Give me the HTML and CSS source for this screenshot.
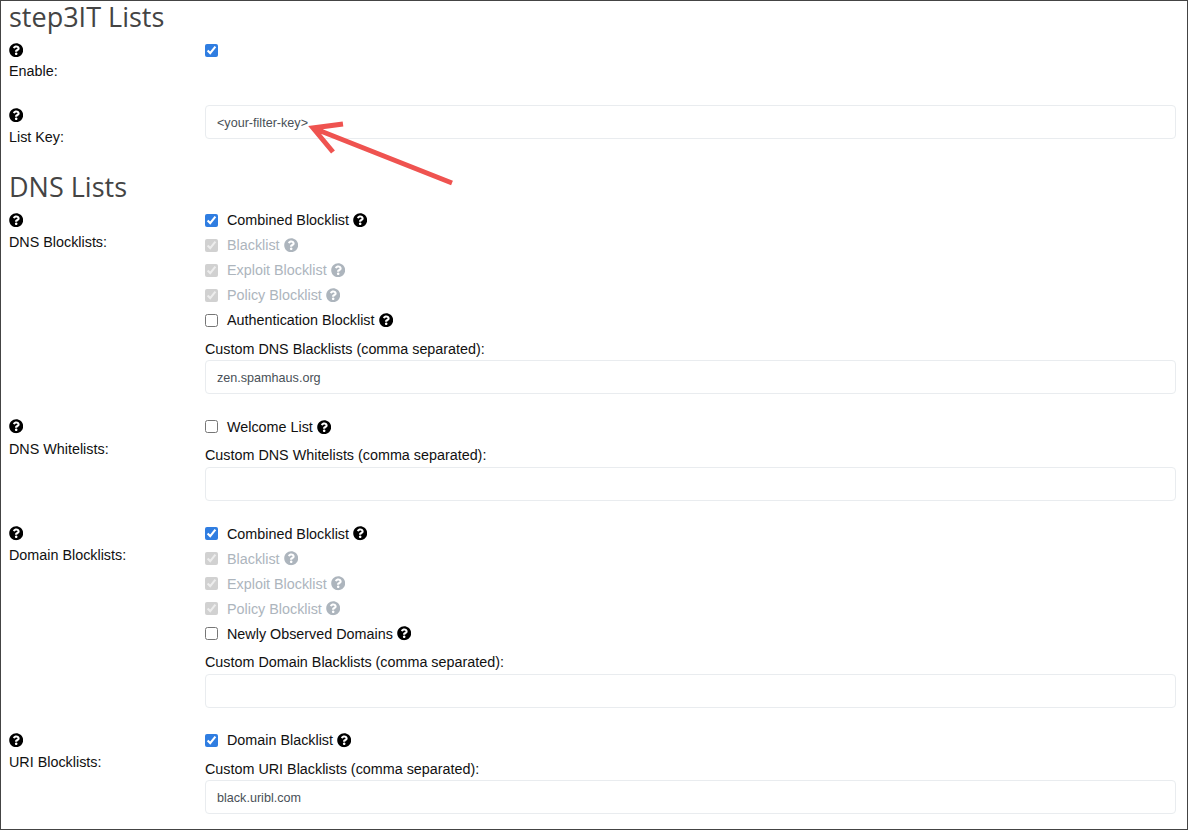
FILE: index.html
```html
<!DOCTYPE html>
<html lang="en">
<head>
    <meta charset="UTF-8">
    <meta name="viewport" content="width=device-width, initial-scale=1.0">
    <title>step3IT Lists</title>
    <link rel="stylesheet" href="styles.css">
</head>
<body>
    <svg class="defs" width="0" height="0">
        <symbol id="help" viewBox="0 0 512 512">
            <path d="M504 256c0 136.997-111.043 248-248 248S8 392.997 8 256C8 119.083 119.043 8 256 8s248 111.083 248 248zM262.655 90c-54.497 0-89.255 22.957-116.549 63.758-3.536 5.286-2.353 12.415 2.715 16.258l34.699 26.31c5.205 3.947 12.621 3.008 16.665-2.122 17.864-22.658 30.113-35.797 57.303-35.797 20.429 0 45.698 13.148 45.698 32.958 0 14.976-12.363 22.667-32.534 33.976C247.128 238.528 216 254.941 216 296v4c0 6.627 5.373 12 12 12h56c6.627 0 12-5.373 12-12v-1.333c0-28.462 83.186-29.647 83.186-106.667 0-58.002-60.165-102-116.531-102zM256 338c-25.365 0-46 20.635-46 46 0 25.364 20.635 46 46 46s46-20.636 46-46c0-25.365-20.635-46-46-46z"/>
        </symbol>
    </svg>
    <div class="frame">
        <h2 class="title">step3IT Lists</h2>

        <div class="row enable-row">
            <div class="row-label">
                <svg class="help"><use href="#help"/></svg>
                <label>Enable:</label>
            </div>
            <div class="row-control">
                <div class="check"><input type="checkbox" checked></div>
            </div>
        </div>

        <div class="row">
            <div class="row-label">
                <svg class="help"><use href="#help"/></svg>
                <label>List Key:</label>
            </div>
            <div class="row-control key-control">
                <input class="text" type="text" value="&lt;your-filter-key&gt;">
            </div>
        </div>

        <h2 class="section">DNS Lists</h2>

        <div class="row">
            <div class="row-label">
                <svg class="help"><use href="#help"/></svg>
                <label>DNS Blocklists:</label>
            </div>
            <div class="row-control">
                <div class="check"><input type="checkbox" checked><span>Combined Blocklist</span><svg class="help"><use href="#help"/></svg></div>
                <div class="check off"><input type="checkbox" checked disabled><span>Blacklist</span><svg class="help"><use href="#help"/></svg></div>
                <div class="check off"><input type="checkbox" checked disabled><span>Exploit Blocklist</span><svg class="help"><use href="#help"/></svg></div>
                <div class="check off"><input type="checkbox" checked disabled><span>Policy Blocklist</span><svg class="help"><use href="#help"/></svg></div>
                <div class="check"><input type="checkbox"><span>Authentication Blocklist</span><svg class="help"><use href="#help"/></svg></div>
                <label class="custom">Custom DNS Blacklists (comma separated):</label>
                <input class="text" type="text" value="zen.spamhaus.org">
            </div>
        </div>

        <div class="row">
            <div class="row-label">
                <svg class="help"><use href="#help"/></svg>
                <label>DNS Whitelists:</label>
            </div>
            <div class="row-control">
                <div class="check"><input type="checkbox"><span>Welcome List</span><svg class="help"><use href="#help"/></svg></div>
                <label class="custom">Custom DNS Whitelists (comma separated):</label>
                <input class="text" type="text">
            </div>
        </div>

        <div class="row">
            <div class="row-label">
                <svg class="help"><use href="#help"/></svg>
                <label>Domain Blocklists:</label>
            </div>
            <div class="row-control">
                <div class="check"><input type="checkbox" checked><span>Combined Blocklist</span><svg class="help"><use href="#help"/></svg></div>
                <div class="check off"><input type="checkbox" checked disabled><span>Blacklist</span><svg class="help"><use href="#help"/></svg></div>
                <div class="check off"><input type="checkbox" checked disabled><span>Exploit Blocklist</span><svg class="help"><use href="#help"/></svg></div>
                <div class="check off"><input type="checkbox" checked disabled><span>Policy Blocklist</span><svg class="help"><use href="#help"/></svg></div>
                <div class="check"><input type="checkbox"><span>Newly Observed Domains</span><svg class="help"><use href="#help"/></svg></div>
                <label class="custom">Custom Domain Blacklists (comma separated):</label>
                <input class="text" type="text">
            </div>
        </div>

        <div class="row">
            <div class="row-label">
                <svg class="help"><use href="#help"/></svg>
                <label>URI Blocklists:</label>
            </div>
            <div class="row-control">
                <div class="check"><input type="checkbox" checked><span>Domain Blacklist</span><svg class="help"><use href="#help"/></svg></div>
                <label class="custom">Custom URI Blacklists (comma separated):</label>
                <input class="text" type="text" value="black.uribl.com">
            </div>
        </div>

        <svg class="arrow" width="160" height="80" viewBox="0 0 160 80">
            <path d="M151 62 L12 7 M42 3 L12 7 L32 31"/>
        </svg>
    </div>
</body>
</html>
```
FILE: styles.css
```css
* {
    box-sizing: border-box;
}
html, body {
    height: 100%;
    overflow: hidden;
}
body {
    margin: 0;
    font-family: "Liberation Sans", Arial, sans-serif;
    font-size: 14.35px;
    color: #111;
    background-color: #fff;
}
.defs {
    position: absolute;
}
.frame {
    position: relative;
    height: 830px;
    padding: 0 11px 0 8px;
    border: 1px solid #444;
    overflow: hidden;
}
h2 {
    margin: 0;
    font-family: "Open Sans", sans-serif;
    font-weight: 400;
    font-size: 27px;
    color: #444;
}
.title {
    height: 36.5px;
    line-height: 32px;
}
.section {
    height: 39.9px;
    line-height: 38px;
}
.row {
    display: grid;
    grid-template-columns: 196px 1fr;
    padding-bottom: 20.2px;
}
.row-label {
    display: flex;
    flex-direction: column;
    align-items: flex-start;
    min-height: 45px;
}
.row-label .help {
    margin: 5px 0 4.8px;
}
.row-label label {
    line-height: 20px;
}
.enable-row label {
    margin-top: -1px;
}
.help {
    display: block;
    width: 14.4px;
    height: 14.4px;
    flex-shrink: 0;
    fill: #000;
}
.check {
    display: flex;
    align-items: center;
    height: 25px;
}
.check input {
    width: 13px;
    height: 13px;
    margin: 0 9px 0 0;
    accent-color: #2f7de1;
}
.check span {
    margin-right: 4px;
}
.check.off {
    color: #adb5bd;
}
.check.off .help {
    fill: #adb5bd;
}
.custom {
    display: block;
    padding-top: 6px;
    height: 27.5px;
    line-height: 20px;
}
.key-control {
    padding-top: 2.3px;
}
.text {
    display: block;
    width: 100%;
    height: 34px;
    padding: 2px 11px 0;
    border: 1px solid #e9ecef;
    border-radius: 4px;
    font-family: "Liberation Sans", Arial, sans-serif;
    font-size: 12.6px;
    color: #495057;
    background-color: #fff;
    outline: none;
}
.arrow {
    position: absolute;
    left: 300px;
    top: 120px;
    fill: none;
    stroke: #ef5350;
    stroke-width: 5;
}
```
